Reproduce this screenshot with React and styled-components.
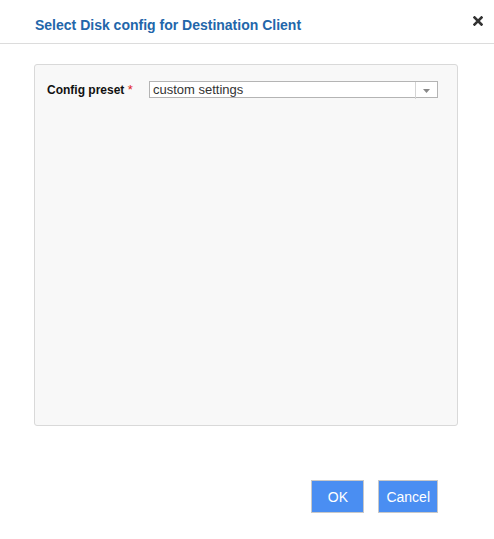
import { createGlobalStyle, styled } from "styled-components";

const GlobalStyle = createGlobalStyle`
  html, body {
    margin: 0;
    padding: 0;
    background: #fff;
  }
  body {
    font-family: "Liberation Sans", Arial, sans-serif;
  }
  *, *::before, *::after {
    box-sizing: border-box;
  }
`;

export default function App() {
  return (
    <>
      <GlobalStyle />
      <Dialog>
        <Header>
          <Title>Select Disk config for Destination Client</Title>
          <CloseButton aria-label="close">
            <svg width="10" height="10" viewBox="0 0 10 10">
              <path
                d="M1.5 1.5 L8.5 8.5 M8.5 1.5 L1.5 8.5"
                stroke="#333"
                strokeWidth="2.6"
                strokeLinecap="square"
              />
            </svg>
          </CloseButton>
        </Header>
        <Body>
          <Panel>
            <FieldRow>
              <Label>
                Config preset <Required>*</Required>
              </Label>
              <Select>
                <SelectValue>custom settings</SelectValue>
                <SelectArrow>
                  <svg width="7" height="4" viewBox="0 0 7 4">
                    <path d="M0 0 H7 L3.5 4 Z" fill="#888" />
                  </svg>
                </SelectArrow>
              </Select>
            </FieldRow>
          </Panel>
        </Body>
        <Footer>
          <Button>OK</Button>
          <Button>Cancel</Button>
        </Footer>
      </Dialog>
    </>
  );
}

const Dialog = styled.div`
  width: 494px;
  height: 539px;
  display: flex;
  flex-direction: column;
  background: #fff;
`;

const Header = styled.div`
  height: 44px;
  border-bottom: 1px solid #dcdcdc;
  display: flex;
  align-items: center;
  justify-content: space-between;
  padding: 0 11px 0 35px;
`;

const Title = styled.h1`
  margin: 0;
  font-size: 14px;
  font-weight: bold;
  color: #2266aa;
  padding-top: 6px;
`;

const CloseButton = styled.button`
  border: none;
  background: transparent;
  padding: 0;
  display: flex;
  cursor: pointer;
  margin-bottom: 2px;
`;

const Body = styled.div`
  padding: 20px 36px 0 34px;
`;

const Panel = styled.div`
  height: 362px;
  background: #f8f8f8;
  border: 1px solid #d9d9d9;
  border-radius: 3px;
  padding: 16px 19px 0 12px;
`;

const FieldRow = styled.div`
  display: grid;
  grid-template-columns: 102px 1fr;
  align-items: center;
`;

const Label = styled.label`
  font-size: 12px;
  font-weight: bold;
  color: #111;
`;

const Required = styled.span`
  color: #e02020;
  font-weight: normal;
  font-size: 13px;
`;

const Select = styled.div`
  height: 17px;
  border: 1px solid #b4b4b4;
  background: #fff;
  display: flex;
  align-items: center;
`;

const SelectValue = styled.span`
  flex: 1;
  padding-left: 3px;
  font-size: 13px;
  color: #333;
  line-height: 15px;
`;

const SelectArrow = styled.span`
  width: 22px;
  height: 17px;
  margin-bottom: -2px;
  border-left: 1px solid #d4d4d4;
  display: flex;
  align-items: center;
  justify-content: center;
`;

const Footer = styled.div`
  display: flex;
  justify-content: flex-end;
  gap: 14px;
  padding: 54px 56px 0 0;
`;

const Button = styled.button`
  height: 33px;
  min-width: 53px;
  padding: 0 7px;
  background: #4a8ef2;
  border: 1px solid #c8c8c8;
  color: #fff;
  font-family: "Liberation Sans", Arial, sans-serif;
  font-size: 14px;
  cursor: pointer;
`;
